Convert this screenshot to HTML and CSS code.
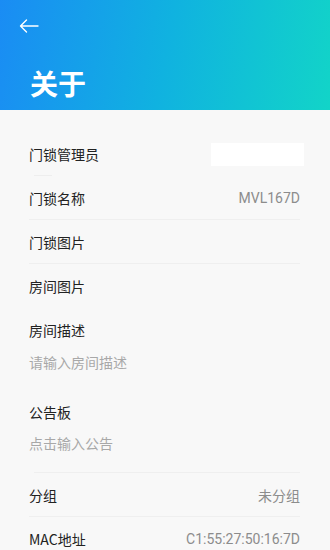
FILE: index.html
```html
<!DOCTYPE html>
<html lang="zh">
<head>
<meta charset="utf-8">
<link rel="stylesheet" href="styles.css">
</head>
<body>
<header class="header">
  <div class="back">
    <svg width="20" height="14" viewBox="0 0 20 14"><path d="M19 7H1.5M7.5 1L1.5 7l6 6" fill="none" stroke="#fff" stroke-width="1.4" stroke-linecap="round" stroke-linejoin="round"/></svg>
  </div>
  <h1 class="title">关于</h1>
</header>
<main class="list">
  <div class="row short-line"><span class="label">门锁管理员</span><span class="blank"></span></div>
  <div class="row line"><span class="label">门锁名称</span><span class="value">MVL167D</span></div>
  <div class="row line"><span class="label">门锁图片</span></div>
  <div class="row"><span class="label">房间图片</span></div>
  <div class="block">
    <div class="row"><span class="label">房间描述</span></div>
    <div class="hint first">请输入房间描述</div>
  </div>
  <div class="block line">
    <div class="row"><span class="label">公告板</span></div>
    <div class="hint second">点击输入公告</div>
  </div>
  <div class="row line"><span class="label">分组</span><span class="value">未分组</span></div>
  <div class="row"><span class="label">MAC地址</span><span class="value">C1:55:27:50:16:7D</span></div>
</main>
</body>
</html>
```
FILE: styles.css
```css
* { box-sizing: border-box; }
html, body { margin: 0; padding: 0; }
body {
  width: 330px;
  height: 550px;
  overflow: hidden;
  background: #f8f8f8;
  font-family: Roboto, "Noto Sans CJK SC", sans-serif;
  font-size: 14px;
  color: #222;
}
.header {
  height: 110px;
  background: linear-gradient(100deg, #1a8cf4 0%, #10b2e0 50%, #12d4c8 100%);
  padding: 19px 0 0 19px;
}
.back { height: 14px; display: flex; align-items: center; }
.back svg { display: block; }
.title {
  margin: 32px 0 0 11px;
  font-family: "Noto Sans CJK SC", sans-serif;
  font-size: 28px;
  font-weight: 700;
  line-height: 36px;
  color: #fff;
}
.list { padding: 22px 30px 0 29px; }
.row {
  height: 44px;
  display: flex;
  align-items: center;
  justify-content: space-between;
  position: relative;
}
.label { font-family: "Noto Sans CJK SC", sans-serif; color: #222; }
.value { color: #8c8c8c; }
.line { border-bottom: 1px solid #efefef; }
.short-line::after {
  content: "";
  position: absolute;
  left: 5px;
  bottom: 0;
  width: 18px;
  height: 1px;
  background: #eeeeee;
}
.blank {
  width: 93px;
  height: 23px;
  background: #fff;
  margin-right: -4px;
}
.hint {
  font-family: "Noto Sans CJK SC", sans-serif;
  color: #a8a8a8;
  line-height: 20px;
}
.hint.first { padding-bottom: 18px; }
.hint.second { line-height: 18px; padding-bottom: 20px; }
.block.line { margin-left: 5px; }
.block.line .row, .block.line .hint { margin-left: -5px; }
```
